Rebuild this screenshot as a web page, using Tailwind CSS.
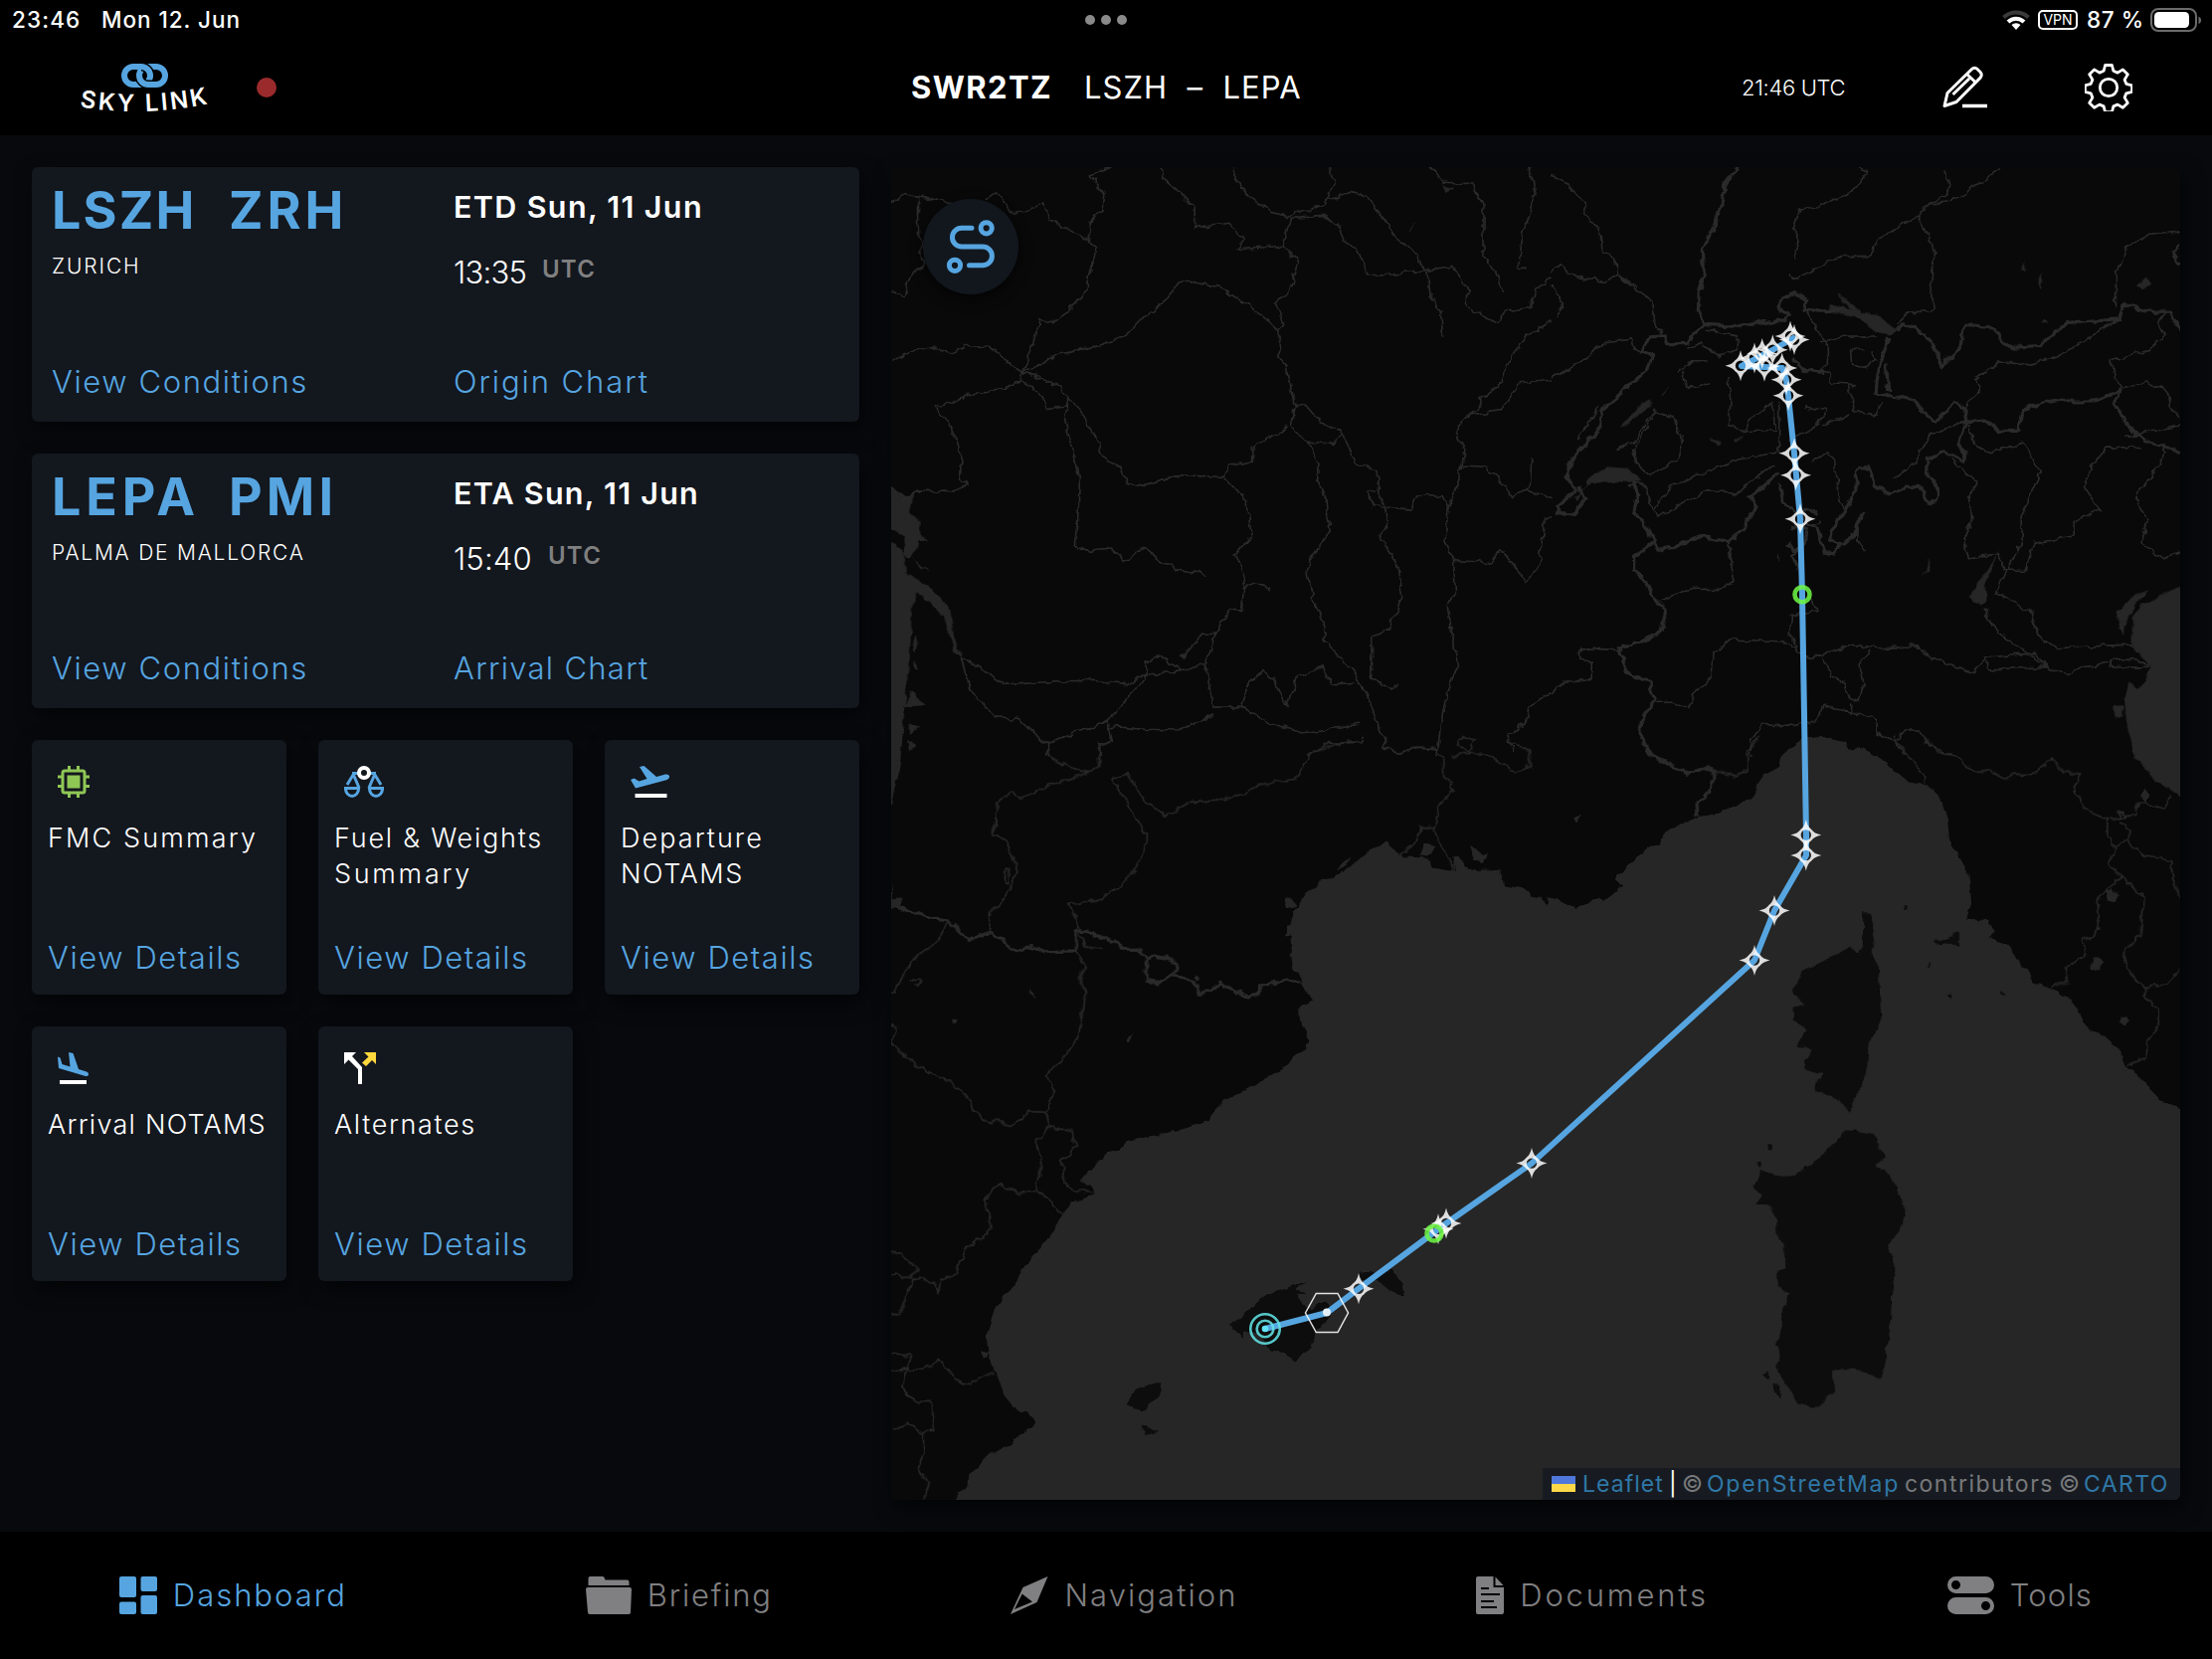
<!DOCTYPE html>
<html lang="en">
<head>
<meta charset="utf-8">
<title>Sky Link</title>
<script src="https://cdn.jsdelivr.net/npm/@tailwindcss/browser@4"></script>
</head>
<body class="flex h-[1668px] w-[2224px] flex-col overflow-hidden bg-[#07090d] font-['Inter',sans-serif] font-light text-white">

<!-- status bar -->
<div class="relative flex h-10 shrink-0 items-center justify-between bg-black text-[22.5px] leading-10">
  <div class="flex pl-3">
    <span class="w-[90px] font-medium tracking-[0.05em]">23:46</span><span class="font-medium tracking-[0.042em]">Mon 12. Jun</span>
  </div>
  <div class="absolute left-[1091px] top-[15px] flex gap-[6px]"><i class="size-[10px] rounded-full bg-[#8a8a8a]"></i><i class="size-[10px] rounded-full bg-[#8a8a8a]"></i><i class="size-[10px] rounded-full bg-[#8a8a8a]"></i></div>
  <div class="flex items-center pr-2">
    <svg class="mr-2 h-5 w-7" viewBox="0 0 28 20" fill="none"><path d="M1.5 7.5a18 18 0 0 1 25 0" stroke="#3a3a3a" stroke-width="4"/><path d="M6 12a11.5 11.5 0 0 1 16 0" stroke="#fff" stroke-width="4"/><path d="M14 20l-4.5-5a6.5 6.5 0 0 1 9 0z" fill="#fff"/></svg>
    <span class="mr-[9px] flex h-5 w-10 items-center justify-center rounded-[5px] border-2 border-white text-[14px] font-normal leading-none">VPN</span>
    <span class="mr-2 w-[56px] whitespace-nowrap font-medium tracking-[0.025em]">87 %</span>
    <svg class="h-6 w-[54px]" viewBox="0 0 54 24"><rect x="1" y="1" width="45" height="22" rx="7" fill="none" stroke="#6b6b6b" stroke-width="2"/><rect x="4" y="4" width="35" height="16" rx="4.500" fill="#fff"/><path d="M48.500 8.500a4 4 0 0 1 0 7.500z" fill="#6b6b6b"/></svg>
  </div>
</div>

<!-- header -->
<header class="relative flex h-24 shrink-0 items-center bg-black">
  <svg class="ml-[72px] h-[72px] w-[146px] overflow-visible" viewBox="72 52 146 72">
    <g fill="none" stroke="#56a5e0" stroke-width="6">
      <rect x="125" y="67" width="26" height="18" rx="9"/>
      <rect x="140" y="67" width="26" height="18" rx="9" stroke="#000" stroke-width="9"/>
      <rect x="140" y="67" width="26" height="18" rx="9"/>
      <path d="M142 67a9 9 0 0 1 9 9" stroke="#000" stroke-width="9"/>
      <path d="M134 67h8a9 9 0 0 1 9 9v2"/>
    </g>
    <path id="smile" d="M80 107.500Q144 118 211 104" fill="none"/>
    <text font-family="Inter" font-weight="600" font-size="24" fill="#fff"><textPath href="#smile" textLength="130">SKY LINK</textPath></text>
  </svg>
  <i class="ml-10 size-5 rounded-full bg-[#9b2a2c]"></i>
  <div class="absolute left-[916px] flex text-[31px] leading-10">
    <span class="w-[174px] font-bold tracking-[0.045em]">SWR2TZ</span><span class="whitespace-pre font-normal tracking-[0.033em]">LSZH  –  LEPA</span>
  </div>
  <div class="ml-auto flex items-center pr-20">
    <span class="mr-[97px] w-[105px] whitespace-nowrap text-[22px] tracking-[-0.015em]">21:46 UTC</span>
    <svg class="mr-[97px] h-11 w-[46px]" viewBox="0 0 46 44" fill="none" stroke="#fff" stroke-width="3" stroke-linejoin="round"><path d="M2 40.500L5 27.500 29.500 3.500a4 4 0 0 1 5.600 0l3 3a4 4 0 0 1 0 5.600L14 36.500z"/><path d="M24.500 8.500l9 8.500M10.500 29L27 13"/><path d="M20 40.500h25" stroke-width="3.500"/></svg>
    <svg class="size-12" viewBox="0 0 48 48" fill="none" stroke="#fff" stroke-width="2.800" stroke-linejoin="round"><circle cx="24" cy="24" r="8.700"/><path d="M20.600 1.500h6.800l1.500 5.800 4.200 1.800 5.300-3.200 4.900 4.900-3.200 5.300 1.700 4.200 5.800 1.500v6.600l-5.800 1.500-1.700 4.200 3.200 5.300-4.900 4.900-5.300-3.200-4.200 1.800-1.500 5.800h-6.800l-1.500-5.800-4.200-1.800-5.300 3.200-4.900-4.900 3.200-5.300-1.700-4.200-5.800-1.500v-6.600l5.800-1.500 1.700-4.200-3.200-5.300 4.900-4.900 5.300 3.200 4.200-1.800z"/></svg>
  </div>
</header>

<main class="flex min-h-0 grow gap-8 p-8">
  <!-- flight overview -->
  <section class="flex w-[832px] flex-col gap-8">
    <div class="grid h-64 grid-cols-[404px_1fr] rounded-md bg-[#13171e] pb-5 pl-5 pt-3 shadow-[4px_8px_20px_rgba(0,0,0,0.6)]">
      <div class="flex flex-col">
        <div class="flex text-[52px] font-bold leading-16 text-[#56a5e0]"><span class="w-[178px] tracking-[0.042em]">LSZH</span><span class="tracking-[0.075em]">ZRH</span></div>
        <div class="mt-[10px] text-[21px] leading-7 tracking-[0.09em]">ZURICH</div>
        <div class="mt-auto text-[31px] leading-10 tracking-[0.052em] text-[#56a5e0]">View Conditions</div>
      </div>
      <div class="flex flex-col pt-2">
        <div class="text-[30.5px] font-semibold leading-10 tracking-[0.044em]">ETD Sun, 11 Jun</div>
        <div class="mt-[26px] flex text-[31px] leading-10"><span class="w-[89px] tracking-[-0.025em]">13:35</span><span class="mt-[5px] text-[24px] font-semibold leading-6 tracking-[0.05em] text-[#808080]">UTC</span></div>
        <div class="mt-auto text-[31px] leading-10 tracking-[0.062em] text-[#56a5e0]">Origin Chart</div>
      </div>
    </div>
    <div class="grid h-64 grid-cols-[404px_1fr] rounded-md bg-[#13171e] pb-5 pl-5 pt-3 shadow-[4px_8px_20px_rgba(0,0,0,0.6)]">
      <div class="flex flex-col">
        <div class="flex text-[52px] font-bold leading-16 text-[#56a5e0]"><span class="w-[178px] tracking-[0.095em]">LEPA</span><span class="tracking-[0.08em]">PMI</span></div>
        <div class="mt-[10px] text-[21px] leading-7 tracking-[0.084em]">PALMA DE MALLORCA</div>
        <div class="mt-auto text-[31px] leading-10 tracking-[0.052em] text-[#56a5e0]">View Conditions</div>
      </div>
      <div class="flex flex-col pt-2">
        <div class="text-[30.5px] font-semibold leading-10 tracking-[0.041em]">ETA Sun, 11 Jun</div>
        <div class="mt-[26px] flex text-[31px] leading-10"><span class="w-[95px] tracking-[0.005em]">15:40</span><span class="mt-[5px] text-[24px] font-semibold leading-6 tracking-[0.05em] text-[#808080]">UTC</span></div>
        <div class="mt-auto text-[31px] leading-10 tracking-[0.042em] text-[#56a5e0]">Arrival Chart</div>
      </div>
    </div>
    <div class="grid grid-cols-3 gap-8">
      <div class="flex h-64 flex-col rounded-md bg-[#13171e] pb-[17px] pl-4 pt-[26px] shadow-[4px_8px_20px_rgba(0,0,0,0.6)]">
        <svg class="ml-[10px] size-8" viewBox="0 0 32 32" fill="none" stroke="#8fc755" stroke-width="3"><rect x="5" y="5" width="22" height="22" rx="2"/><rect x="9.500" y="9.500" width="13" height="13" fill="#8fc755" stroke="none"/><path d="M11.500 0v5M20.500 0v5M11.500 27v5M20.500 27v5M0 11h5M0 20.500h5M27 11h5M27 20.500h5"/></svg>
        <div class="mt-[23px] text-[27px] leading-9 tracking-[0.08em]">FMC Summary</div>
        <div class="mt-auto text-[31px] leading-10 tracking-[0.051em] text-[#56a5e0]">View Details</div>
      </div>
      <div class="flex h-64 flex-col rounded-md bg-[#13171e] pb-[17px] pl-4 pt-[26px] shadow-[4px_8px_20px_rgba(0,0,0,0.6)]">
        <svg class="ml-[10px] h-8 w-10" viewBox="0 0 40 32" fill="none" stroke="#56a5e0" stroke-width="3"><path d="M8 7.500h24M10 7.500L3 19M9 8l6 14M31 8l-6 14M30 7.500L37 19"/><path d="M1.400 22.500h13.200a6.600 8 0 0 1-13.200 0zM25.400 22.500h13.200a6.600 8 0 0 1-13.200 0z"/><circle cx="20" cy="7" r="5" fill="#13171e" stroke="#fff" stroke-width="4"/></svg>
        <div class="mt-[23px] text-[27px] leading-9"><span class="tracking-[0.065em]">Fuel &amp; Weights</span><br><span class="tracking-[0.1em]">Summary</span></div>
        <div class="mt-auto text-[31px] leading-10 tracking-[0.051em] text-[#56a5e0]">View Details</div>
      </div>
      <div class="flex h-64 flex-col rounded-md bg-[#13171e] pb-[17px] pl-4 pt-[26px] shadow-[4px_8px_20px_rgba(0,0,0,0.6)]">
        <svg class="ml-[10px] h-8 w-10" viewBox="0 0 40 32"><path d="M0 14l3.500-1.500 5 3 8-2.500L9 1l4.500-1 12.500 11 9-2.500q3-.5 4 1.500.5 3-3 4.200L5 22.500z" fill="#56a5e0"/><path d="M4.500 28h32v4h-32z" fill="#fff"/></svg>
        <div class="mt-[23px] text-[27px] leading-9"><span class="tracking-[0.076em]">Departure</span><br><span class="tracking-[0.058em]">NOTAMS</span></div>
        <div class="mt-auto text-[31px] leading-10 tracking-[0.051em] text-[#56a5e0]">View Details</div>
      </div>
      <div class="flex h-64 flex-col rounded-md bg-[#13171e] pb-[17px] pl-4 pt-[26px] shadow-[4px_8px_20px_rgba(0,0,0,0.6)]">
        <svg class="ml-[10px] size-8" viewBox="0 0 32 32"><path d="M0 4.500l2.500 1 2 6.500 8 2.500L11 0l4.500 1L21 17l8 2.500q2.500 1 2 3t-3 1.500L1 16z" fill="#56a5e0"/><path d="M2 28h27v4H2z" fill="#fff"/></svg>
        <div class="mt-[23px] text-[27px] leading-9 tracking-[0.046em]">Arrival NOTAMS</div>
        <div class="mt-auto text-[31px] leading-10 tracking-[0.051em] text-[#56a5e0]">View Details</div>
      </div>
      <div class="flex h-64 flex-col rounded-md bg-[#13171e] pb-[17px] pl-4 pt-[26px] shadow-[4px_8px_20px_rgba(0,0,0,0.6)]">
        <svg class="ml-[10px] size-8" viewBox="0 0 32 32"><path d="M0 0h12L8 4l10 11v17h-4V17L4.500 7.500 0 12z" fill="#fff"/><path d="M32 0v12l-4-4-6 6-4-3.500 6.500-6L20 0z" fill="#ffd83d"/></svg>
        <div class="mt-[23px] text-[27px] leading-9 tracking-[0.06em]">Alternates</div>
        <div class="mt-auto text-[31px] leading-10 tracking-[0.051em] text-[#56a5e0]">View Details</div>
      </div>
    </div>
  </section>

  <!-- route map -->
  <section class="relative h-[1340px] w-[1296px] overflow-hidden rounded-md bg-[#090909] shadow-[4px_8px_20px_rgba(0,0,0,0.6)]">
    <svg class="block h-[1340px] w-[1296px]" viewBox="896 168 1296 1340">
      <defs>
        <filter id="rough" filterUnits="userSpaceOnUse" x="880" y="150" width="1330" height="1380"><feTurbulence type="fractalNoise" baseFrequency="0.1" numOctaves="2" seed="4"/><feDisplacementMap in="SourceGraphic" scale="8" xChannelSelector="R" yChannelSelector="G"/></filter>
        <filter id="shore" filterUnits="userSpaceOnUse" x="880" y="150" width="1330" height="1380"><feTurbulence type="fractalNoise" baseFrequency="0.1" numOctaves="2" seed="9"/><feDisplacementMap in="SourceGraphic" scale="6" xChannelSelector="R" yChannelSelector="G"/></filter>
        <path id="wp" fill-rule="evenodd" fill="#fff" fill-opacity=".85" d="M0-15.500Q1.500-8 5.500-5.500 8-1.500 15.500 0 8 1.500 5.500 5.500 1.500 8 0 15.500-1.500 8-5.500 5.500-8 1.500-15.500 0-8-1.500-5.500-5.500-1.500-8 0-15.500zM5.200 0A5.200 5.200 0 1 0-5.200 0 5.200 5.200 0 1 0 5.200 0z"/>
      </defs>

      <!-- water -->
      <g filter="url(#shore)" fill="#262626">
        <g transform="translate(896 740) scale(.42347 .5102)">
          <path d="M150 1530L156 1505 160 1490 183 1478 185 1455 208 1440 225 1418 280 1398 300 1382 345 1354 325 1335 290 1322 262 1290 247 1255 230 1215 226 1180 245 1130 270 1100 297 1080 308 1052 335 1028 345 1015 385 975 412 935 430 918 465 910 483 900 470 885 448 878 490 838 515 820 548 812 560 800 610 790 690 775 757 758 762 745 790 720 850 695 895 672 930 655 960 630 985 615 990 600 982 575 968 560 966 540 975 530 1003 520 985 508 975 490 970 470 955 462 949 430 949 370 958 345 985 310 1020 285 1050 280 1080 262 1110 245 1150 218 1180 210 1195 230 1220 238 1275 240 1285 262 1340 266 1350 245 1380 265 1445 262 1455 295 1500 300 1520 315 1545 318 1555 335 1568 325 1590 325 1590 1530z"/>
          <path d="M1058 265L1075 245 1095 238 1070 262zM935 318l15 5 12 12-20 5zM938 375l12-4v20l-14 2zM1255 235l10-22 28 4-12 16zM1375 215l20 12 10 8 15-3-18 18-20-8zM1335 240l12-2 8 14-15 8zM330 495l12 20-10-4zM555 602l20-18-10 20zM145 558h12v8h-12zM38 8l22 10-18 8zM-20-10H28L22 50 0 135-20 140zM215 1214l14-2v10l-10 2zM5 322l20-2-5 15-20 8v-55z"/>
        </g>
        <g transform="translate(1560 740) scale(.42347 .5102)">
          <path d="M-10 320L40 330 55 342 90 325 110 320 125 325 145 312 168 295 150 282 180 255 200 240 240 215 260 212 265 195 290 180 340 160 400 152 470 125 485 115 485 100 505 75 540 60 550 35 600 5 640 2 695 12 705 25 730 22 780 45 845 88 890 95 925 125 940 165 945 205 990 270 997 330 985 360 1030 362 1048 380 1042 400 1090 415 1115 450 1135 465 1145 485 1190 498 1235 520 1275 580 1300 585 1345 615 1365 655 1400 672 1445 720 1492 731 1530 731V1530H-10z"/>
          <path d="M1315 305l15-3 18 12-8 14-20-3zM1282 440l15-6 12 12-10 16-18-6zM1348 556l12-3 10 8-8 10-12-4zM52 165l20-12-12 18zM1398 118l14-13 10 14-12 12z"/>
        </g>
        <g transform="translate(1560 160) scale(.42347 .38265)">
          <path d="M1530 1100L1460 1140 1400 1170 1378 1200 1378 1285 1422 1332 1410 1370 1395 1390 1370 1375 1360 1420 1365 1480 1385 1576 1430 1629 1530 1700z"/>
          <path d="M672 350L705 372 735 402 775 408 820 448 798 462 768 458 735 420 655 400 665 378 712 398zM65 880L95 830 130 808 180 812 215 845 120 848 80 858 60 900 55 885zM160 705l40-50 35-25 2 20-28 20-30 30zM258 620l25-28-18 26zM372 728l36 22-15 3zM430 740l28-16-20 20zM1062 1022l-15 50-18 50 5 45-15 5-28-20 20-45 22-20zM1120 262l8 36-10-2zM1166 292l-4 55-8-28zM1390 330l22-20 10 18-18 14zM1162 432l8-10 6 10zM893 1046l8 36-25 12 15-12zM1340 1190l20-15 25-30 35-10-30 30-20 35-12 50-12-30zM1332 1438l25-4v30l-22 2zM535 1035l5 24-7-10z"/>
        </g>
        <g transform="translate(896 160) scale(.42347 .38265)">
          <path d="M-20 862L0 862 35 885 55 875 45 925 70 955 72 985 88 1008 66 1000 60 1028 42 1050 30 1040 32 990-20 960zM-20 990L25 1025 33 1050 35 1085 80 1115 120 1150 140 1185 150 1260 170 1310 150 1295 135 1240 125 1200 95 1170 65 1140 50 1165 45 1290 30 1470 20 1568-20 1700zM48 1042l44 44-20-12zM58 1250q14 20 0 45-12-20 0-45zM55 1320q12 10 2 22-8-10-2-22zM48 1395l32 40-50 5zM42 1482l22 8-22 20zM42 1528l20 12-20 14zM1308 68l30 8-20 10zM1222 192l32-32-20 25z"/>
        </g>
      </g>

      <!-- islands -->
      <g filter="url(#shore)" fill="#090909">
        <g transform="translate(896 740) scale(.42347 .5102)">
          <path d="M803 1160L850 1132 885 1105 955 1083 985 1077 962 1092 985 1098 965 1102 975 1120 1000 1130 1028 1115 1050 1130 1030 1155 1005 1175 998 1205 957 1232 935 1215 900 1210 870 1175 838 1175 835 1188 825 1175zM1113 1058L1170 1055 1190 1052 1215 1080 1220 1106 1205 1103 1150 1070 1115 1070zM562 1315L580 1288 640 1272 642 1288 600 1330zM597 1355l15 10 24 7-35 3z"/>
        </g>
        <g transform="translate(1560 740) scale(.42347 .5102)">
          <path d="M740 350L758 350 767 400 760 430 776 455 782 560 752 605 748 665 720 715 708 742 685 718 622 695 645 665 600 655 618 618 582 610 607 578 575 560 573 535 600 530 572 505 595 465 680 430 710 415 730 430 740 400zM700 775L720 778 765 785 790 830 768 848 808 868 840 942 825 975 797 1005 818 1048 808 1110 800 1190 782 1268 712 1243 668 1248 670 1290 632 1322 585 1318 570 1290 532 1245 545 1225 535 1195 550 1160 548 1130 568 1100 538 1085 537 1055 553 1050 552 1000 535 985 535 955 515 925 485 922 498 905 482 890 498 855 550 873 600 855 670 805zM903 402h30l35-15v28l-20-8-25 5zM836 336h7v10h-7zM1070 500l8 12-10-4zM895 449h6v5h-6zM943 510h6v5h-6zM497 848l-8-6 8-2zM512 805h10v10h-10zM525 1275l18 8-2 22-12-15zM500 1260l14-6v16z"/>
        </g>
      </g>

      <!-- regional boundaries and rivers -->
      <g filter="url(#rough)" fill="none" stroke="#2c2c2c" stroke-width="1.600">
        <g transform="translate(896 160) scale(.42347 .38265)">
          <path vector-effect="non-scaling-stroke" d="M520 20L475 42 505 90 500 140 468 165 472 215 490 232 475 285 465 345 425 395 385 430 350 425 335 495 313 560 305 580 270 605 185 615 160 635 105 648 145 705 165 780 165 845 180 855 150 875 60 870 30 900M0 532L55 505 105 495 135 512 180 490 235 493 265 525 313 560 345 545 400 512 480 493 560 462 605 408 640 385 680 330 715 318 785 340 880 408 915 445 925 485 918 520 940 545 957 650 950 705 1000 760 1015 800 1015 850 1032 900 1042 980 1000 1040 988 1080 1000 1150 1030 1230 1030 1270 1085 1330 1130 1410 1168 1515 1170 1545M313 560L400 598 425 632 412 680 435 790 447 850 443 950 435 1015 470 1028 520 1022 555 1055 600 1020 640 1055 700 1085 745 1090M305 580L355 612 370 655 425 650M425 632L445 650 490 740 495 775 545 810 560 850 600 858 680 830 790 835 800 805 858 795 860 755 940 705M790 835L845 900 855 990 815 1040 840 1090 832 1190 805 1180 770 1245 755 1300 745 1325 765 1440 840 1440 885 1475 975 1508 1110 1485M832 1130L865 1112 900 1125 903 1138M745 1325L690 1345 600 1355 560 1382 480 1370 350 1372 270 1380 165 1308 190 1395 245 1465 300 1470 370 1540 370 1568M690 1310L740 1245 770 1245M690 1345L640 1305 605 1320 605 1365 550 1430 515 1475 490 1490 430 1510 370 1540M515 1475L525 1530 490 1540 500 1568M515 1490L600 1498 680 1500 765 1460M832 1440L850 1380 885 1345 910 1370 938 1440 965 1360 1025 1330 1045 1380 1100 1375M640 20L645 50 675 80 720 125 722 182 800 168 840 210 825 237 930 228 965 270 945 350 915 372 930 438 910 445M930 228L950 155 1030 150 1065 180 1075 215 1105 235 1135 305 1265 295M815 20L812 40 840 85 900 140 940 150 1030 120 1052 60 1042 20M1030 110L1095 87 1135 105 1200 210 1240 240 1275 310 1280 360 1305 405 1310 465M1265 295L1330 280 1370 345 1365 390 1440 430 1460 400 1520 390 1525 350 1568 310M1280 20L1310 60 1380 65 1405 120 1405 250 1440 310 1452 348M1515 20L1528 90 1500 200 1488 285 1508 290M957 650L985 645 1020 690 1070 718 1100 795 1155 820 1160 890 1175 915 1235 920 1250 880 1310 885 1325 920 1355 810 1360 760 1340 715 1370 675 1400 650 1400 625 1450 590 1460 540 1510 465 1568 425M985 745L1045 750 1070 718M1155 870L1135 880 1140 910 1175 915 1180 960 1160 990 1200 1060 1213 1150 1180 1240 1140 1255 1140 1365 1190 1398 1205 1375M1355 805L1410 808 1450 845 1475 890 1510 870 1568 890M1370 672L1450 660 1490 590 1568 580M1325 920L1318 1000 1335 1050 1340 1140 1320 1170 1345 1330 1320 1400 1305 1480 1297 1568M1335 1055L1425 1060 1448 1025 1508 1112 1540 1060 1550 950 1568 940M1568 1400L1515 1440 1505 1480 1465 1510 1480 1560M1120 1515L1115 1532 1040 1535 990 1565M1170 1545L1210 1560 1250 1545 1300 1550M0 120L30 90 120 110 150 115M65 100L65 190 75 285 50 295 30 362 0 350M225 105L250 85 290 145 320 140 360 112 380 160 430 195 472 215M1520 785L1518 850 1505 875"/>
        </g>
        <g transform="translate(1560 160) scale(.42347 .38265)">
          <path vector-effect="non-scaling-stroke" d="M0 45L30 60 85 120 78 145 115 190 120 235 150 260 155 305 240 375 245 425 262 460M0 300L20 275 60 310 125 320 155 305 205 335M0 330L28 380 10 415M0 575L60 540 130 480 190 470 195 495 240 520M730 20L752 30 715 85 635 125 590 130 575 180 585 225 575 260M562 300L575 315 640 280 690 255 755 255 780 205 870 150 890 120 950 110 1065 25M870 150L895 200 908 255 900 340 905 400 850 402 820 430M935 30L945 90 890 120M1340 390L1340 300 1365 230 1415 200 1492 190M1345 420L1290 460 1200 520 1120 540 1065 530 1005 580 1020 600 975 660M605 395L630 450 655 480 655 540 640 555M640 480L700 465 770 465M740 500L710 500 712 540 745 550 770 530 765 505M595 550L660 560 665 590 725 595M705 595L720 665 770 675 780 645M640 700L710 670M420 570L425 640 420 700 460 718 530 715 525 640 465 690 460 715M600 650L650 660 630 700 600 720 560 740M540 640L540 770 440 790 390 810 280 860 245 915M150 760L190 750 245 660 290 680 310 740 300 790 235 830 200 800 195 760 240 680M185 860L215 850 250 940 365 875 440 878 530 800M620 795L655 770 675 800 680 880 695 920M815 840L860 800 900 720 980 690M990 690L1000 750 1040 770 1120 745 1160 825 1115 935 1115 1010 1080 1085 1055 1140 1140 1190 1155 1250 1195 1285 1380 1275M950 790L1010 850 990 890 1000 940 980 990 990 1050 1060 1040 1075 1080 1125 1080 1145 1010 1240 990 1240 955 1300 920 1265 860 1280 810 1320 755 1400 760M1455 750L1445 800 1385 890 1415 950 1400 1010 1450 1050 1492 1035M1360 600L1410 585 1465 610 1470 655 1492 680M1455 400L1440 430 1455 465 1420 500 1330 530 1335 580 1360 605M725 960L725 1000 745 1030M420 1005L425 1060 435 1110 400 1130 330 1130 260 1160M620 1155L630 1185 570 1200 565 1250 585 1290 615 1312 710 1275 780 1285 870 1280 900 1310 1000 1350 1030 1310 1130 1300 1180 1340 1225 1355 1260 1335 1325 1325M640 1300L665 1360 690 1370 710 1420 730 1425 740 1380 730 1330 755 1290M1030 1180L1040 1220 1105 1280 1150 1305 1180 1335 1040 1340 1025 1320M250 1425L280 1425 325 1445 335 1410 380 1360 385 1300 420 1265 560 1270 585 1290M160 1290L70 1285 65 1315 95 1320 95 1365 30 1375 0 1405M470 1568L475 1530 500 1485 550 1490 590 1480 625 1485 645 1435 690 1445 770 1470 770 1510 815 1530 840 1500 870 1500 900 1545 960 1568M710 1430V1458M815 1530L840 1568M640 950L620 960M300 560L330 530 370 530M370 450L440 465 440 500 400 520 350 480 320 500M310 560L320 600 375 590M1360 730L1492 700M60 735L95 680 110 650M1325 1320Q1370 1300 1420 1332 1390 1345 1325 1330z"/>
        </g>
        <g transform="translate(896 740) scale(.42347 .5102)">
          <path vector-effect="non-scaling-stroke" d="M345 0L370 15 375 42 430 65 470 72 495 60 495 20 525 12M470 72L390 92 310 122 290 112 250 128 250 165 238 195 275 208 300 265 270 320 235 350 230 385M525 82L565 75 590 118 650 158 710 130 830 118 880 95 960 85 995 35 1060 15 1120 10M525 82L545 110 605 195 605 215 580 265 540 298 490 323 420 330 455 385M440 425L460 450 450 480 462 510 445 590 420 625 370 670 388 700 368 740 378 770 430 780 438 810 405 835 410 880 435 895 480 900M135 365L110 405 45 445 0 515M0 565L15 580 0 605 70 655 165 695 215 755 290 768 330 738 370 740M378 770L345 800 358 850 345 890 405 942M345 895L300 900 260 882 220 912 238 950 230 980 175 1010 155 1060 120 1072 115 1098 100 1075 50 1070 20 1140 0 1140M0 1015L20 1020 65 1050 45 1068 0 1060M0 1215L45 1222 25 1285 55 1310 95 1310 100 1370 75 1372 40 1355 0 1365M75 1372L78 1410 65 1440 88 1470 80 1505M0 1250L70 1248 115 1232 170 1280 245 1255M1170 0V22L1215 35 1240 22 1290 22 1310 45 1312 80 1335 105 1298 140 1290 190 1320 240 1338 262M1290 180H1255L1250 210 1210 230 1210 240M1330 40L1370 30 1430 42 1480 72 1520 60 1515 30 1465 10M1345 20L1360 0 1385 8 1370 28zM272 265l10 0-4 24-8-4zM45 485l20-8 6 8-15 6M445 385L460 415 500 420"/>
        </g>
        <g transform="translate(1560 740) scale(.42347 .5102)">
          <path vector-effect="non-scaling-stroke" d="M495 0L465 30 465 65 440 78 385 70M810 0L850 45 890 80 885 92M880 0L910 30 960 40 1005 72 1040 68 1075 85 1100 75 1150 75 1185 45 1215 70 1255 75 1240 105 1265 145 1320 165 1385 155 1395 130 1440 140 1455 145 1470 115M1320 165L1320 200 1340 220 1320 250 1355 280 1295 320 1300 360 1290 395 1260 400 1265 430 1220 460 1225 488 1195 488 1190 498M1355 280L1405 320 1395 395 1355 430 1370 465 1405 495 1410 520 1445 540 1440 570 1412 600 1410 635 1365 650M1405 495L1460 490 1492 460M1340 220L1380 190 1350 170M1365 205L1410 235 1470 245 1475 280 1492 320M1350 152l10 0 0 8-12 0z"/>
        </g>
      </g>

      <!-- national borders -->
      <g filter="url(#rough)" fill="none" stroke="#2b2b2b" stroke-width="3.200" stroke-linejoin="round">
        <g transform="translate(1560 160) scale(.42347 .38265)">
          <path vector-effect="non-scaling-stroke" d="M442 20L410 70 405 110 388 170 360 235 362 300 350 350 348 395 365 435 330 470 320 485 275 485 270 462 235 465 215 505 245 515 220 560 160 620 120 655 115 705 50 785 38 835 60 870 15 910 15 930 55 930 80 895 65 860M365 435L440 440 500 425 530 430 565 410 540 395 545 370 575 352 605 370 600 395 640 400 690 395M820 450L835 430 885 460 915 505 925 545 970 495 980 435 1040 440 1090 495 1160 490 1225 432 1350 420 1360 380 1410 400 1470 400 1492 445M800 470L775 560 770 615 850 630 910 690 960 640 985 660 980 690 1030 685 1060 712 1105 712 1120 655 1200 635 1290 635 1355 605M795 540L800 610M985 690L965 750 985 770 980 795 930 765 890 790 890 830 915 850 915 895 895 905 870 855 800 880 765 855 755 810 730 810 720 835 725 865 700 920 660 980 665 1000M1355 605L1335 640 1375 710 1420 745 1470 760 1492 770M192 845L205 885 195 925 245 1000 250 1025 290 1020 350 990 420 1005 455 970 485 910 470 885 540 825M540 850L550 900 590 940 630 970 650 1035 670 1040 685 1010 660 1000M725 960L720 985 690 1010M742 925L725 960M245 1005L195 1045 195 1080 230 1115 240 1150 272 1185 260 1240 210 1270 160 1285 180 1350 235 1375 245 1425 210 1475 215 1530 235 1568M570 965L605 970 600 1010 570 1040 585 1075M600 920L630 930M560 1010L580 1030M1492 225L1472 245 1492 280M570 520L600 555 650 560"/>
        </g>
        <g transform="translate(896 740) scale(.42347 .5102)">
          <path vector-effect="non-scaling-stroke" d="M10 335L90 358 135 362 180 402 230 388 265 402 295 425 340 415 365 425 440 423 440 385 465 385 530 405 550 418 585 418 605 440 605 480 630 488 665 470 720 488 735 508 780 488 840 512 870 508 880 492 940 478 975 487M605 440L625 433 668 440 678 458 660 472M722 475l6 8"/>
        </g>
        <g transform="translate(1560 740) scale(.42347 .5102)">
          <path vector-effect="non-scaling-stroke" d="M210 0L240 40 320 73 380 62 385 85 375 110 345 130 347 158"/>
        </g>
      </g>

      <!-- planned route -->
      <path d="M1803 340L1782 352 1751 368 1774 369 1792 370 1796 382 1798 398 1804 456 1806 478 1810 522 1812 598 1816 840V860L1784 915.500 1764 965.500 1540 1169.600 1454 1230 1366 1295.700 1334 1320 1272 1336" fill="none" stroke="#56a5e0" stroke-width="6" stroke-linejoin="round" stroke-linecap="round"/>
      <use href="#wp" x="1750" y="367.700"/><use href="#wp" x="1764" y="360"/><use href="#wp" x="1771.700" y="355.500"/><use href="#wp" x="1782.300" y="351.700"/><use href="#wp" x="1800" y="338"/><use href="#wp" x="1804" y="341.500"/><use href="#wp" x="1774" y="368.300"/><use href="#wp" x="1791.700" y="370"/><use href="#wp" x="1796" y="381.700"/><use href="#wp" x="1798" y="397.700"/>
      <use href="#wp" x="1804" y="455.800"/><use href="#wp" x="1805.600" y="477.700"/><use href="#wp" x="1810" y="521.700"/><use href="#wp" x="1815.800" y="839.500"/><use href="#wp" x="1815.800" y="860"/><use href="#wp" x="1784" y="915.500"/><use href="#wp" x="1764" y="965.500"/><use href="#wp" x="1540" y="1169.600"/><use href="#wp" x="1454" y="1230"/><use href="#wp" x="1446" y="1235.700"/><use href="#wp" x="1366" y="1295.700"/>
      <g fill="none" stroke="#6cf344" stroke-opacity=".87" stroke-width="4.600"><circle cx="1812" cy="597.800" r="7.500"/><circle cx="1442" cy="1240" r="7.500"/></g>
      <path d="M1312.500 1320l10.800-19.500h21.700l10.500 19.500-10.500 19.500h-21.700z" fill="none" stroke="#fff" stroke-opacity=".87" stroke-width="1.500"/>
      <circle cx="1334" cy="1319.500" r="4" fill="#e2eff9"/>
      <g fill="none" stroke="#62e3e6" stroke-opacity=".87" stroke-width="2.600"><circle cx="1272" cy="1336" r="14.700"/><circle cx="1272" cy="1336" r="8.300"/><circle cx="1272" cy="1336" r="3.300" fill="#62e3f5" stroke="none"/></g>
    </svg>

    <button class="absolute left-8 top-8 flex size-24 items-center justify-center rounded-full bg-[#12171e] shadow-[0_4px_14px_rgba(0,0,0,0.7)]">
      <svg class="size-24" viewBox="928 200 96 96" fill="none" stroke="#56a5e0" stroke-width="5" stroke-linecap="round"><circle cx="991.700" cy="229.300" r="5.600"/><circle cx="960" cy="266.800" r="5.600"/><path d="M977 229.300H966.800a9.350 9.350 0 0 0 0 18.700H988a9.400 9.400 0 0 1 0 18.800H974.500"/></svg>
    </button>

    <div class="absolute bottom-0 right-0 flex h-8 w-[641px] items-center whitespace-nowrap bg-[#171b21] pl-[9px] text-[23px] font-normal leading-8 text-[#78797b]">
      <i class="mr-[7px] h-4 w-6 bg-linear-to-b from-[#5078dc] from-50% to-[#fcd748] to-50%"></i>
      <span class="w-[87px] tracking-[0.045em] text-[#2f78a8]">Leaflet</span><span class="w-[13px] text-white">|</span><span class="w-[25px]">©</span><span class="w-[199px] tracking-[0.076em] text-[#2f78a8]">OpenStreetMap</span><span class="w-[155px] tracking-[0.064em]">contributors</span><span class="w-[25px]">©</span><span class="tracking-[0.06em] text-[#2f78a8]">CARTO</span>
    </div>
  </section>
</main>

<!-- tab bar -->
<nav class="flex h-32 shrink-0 items-center justify-around bg-black text-[31px] leading-10 text-[#808082]">
  <a class="flex items-center gap-4 text-[#56a5e0]"><svg class="h-[38px] w-[38px]" viewBox="0 0 38 38" fill="currentColor"><rect width="17" height="21" rx="2"/><rect x="21.500" width="16.500" height="15" rx="2"/><rect y="25.500" width="17" height="12.500" rx="2"/><rect x="21.500" y="19" width="16.500" height="19" rx="2"/></svg><span class="tracking-[0.064em]">Dashboard</span></a>
  <a class="flex items-center gap-4"><svg class="h-[38px] w-[46px]" viewBox="0 0 46 38" fill="currentColor"><path d="M2.500 9V2q0-2 2-2h12q1.500 0 2 1l1 2.500h22q2 0 2 2V9zM0 13q0-2 2-2h42q2 0 2 2l-1 23q0 2-2 2H4q-2 0-2-2z"/></svg><span class="tracking-[0.058em]">Briefing</span></a>
  <a class="flex items-center gap-4"><svg class="h-[38px] w-[38px]" viewBox="0 0 38 38" fill="currentColor" fill-rule="evenodd"><path d="M37.500 0L26.500 26 0 38 12.500 11zM11.700 17.500L4 33l18-7.500z"/></svg><span class="tracking-[0.067em]">Navigation</span></a>
  <a class="flex items-center gap-4"><svg class="h-[38px] w-7" viewBox="0 0 28 38" fill="currentColor" fill-rule="evenodd"><path d="M2 0h15.500v11H28v25q0 2-2 2H2q-2 0-2-2V2q0-2 2-2zM5 11v2h8v-2zM5 17v2h19v-2zM5 24v2h13v-2zM5 30v2h16v-2z"/><path d="M19.500.5L27.500 9h-8z"/></svg><span class="tracking-[0.09em]">Documents</span></a>
  <a class="flex items-center gap-4"><svg class="h-[38px] w-[47px]" viewBox="0 0 47 38" fill="currentColor" fill-rule="evenodd"><path d="M8.500 0h30a8.500 8.500 0 0 1 0 17h-30a8.500 8.500 0 0 1 0-17zM8.500 4a4.500 4.500 0 1 0 0 9 4.500 4.500 0 1 0 0-9zM8.500 21h30a8.500 8.500 0 0 1 0 17h-30a8.500 8.500 0 0 1 0-17zM38.500 25a4.500 4.500 0 1 0 0 9 4.500 4.500 0 1 0 0-9z"/></svg><span class="tracking-[0.04em]">Tools</span></a>
</nav>
</body>
</html>
